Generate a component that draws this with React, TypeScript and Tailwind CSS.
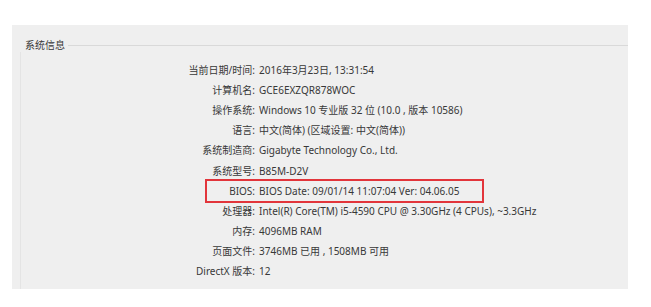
// system info panel (dxdiag style) with the BIOS row marked in red

const rows: { label: string; value: string; mark?: boolean }[] = [
  { label: "当前日期/时间:", value: "2016年3月23日, 13:31:54" },
  { label: "计算机名:", value: "GCE6EXZQR878WOC" },
  { label: "操作系统:", value: "Windows 10 专业版 32 位 (10.0 , 版本 10586)" },
  { label: "语言:", value: "中文(简体) (区域设置: 中文(简体))" },
  { label: "系统制造商:", value: "Gigabyte Technology Co., Ltd." },
  { label: "系统型号:", value: "B85M-D2V" },
  { label: "BIOS:", value: "BIOS Date: 09/01/14 11:07:04 Ver: 04.06.05", mark: true },
  { label: "处理器:", value: "Intel(R) Core(TM) i5-4590 CPU @ 3.30GHz (4 CPUs), ~3.3GHz" },
  { label: "内存:", value: "4096MB RAM" },
  { label: "页面文件:", value: "3746MB 已用 , 1508MB 可用" },
  { label: "DirectX 版本:", value: "12" },
];

export default function App() {
  return (
    <div
      className="w-[651px] h-[307px] bg-white pt-[25px] pl-[12px] text-[10px] text-[#383838]"
      style={{ fontFamily: '"Noto Sans", "Noto Sans CJK SC", sans-serif' }}
    >
      <div className="w-[616px] h-[264px] bg-[#efefef] pl-[8px] pt-[13px]">
        {/* group box title + line */}
        <div className="flex items-center h-[14px] -ml-[2px]">
          <span className="pl-[7px] pr-[3px] leading-[14px]">系统信息</span>
          <div className="flex-1 h-px bg-[#d9d9d9]" />
        </div>

        <div className="border-l border-[#e4e4e4] h-[237px] pt-[8px]">
          {rows.map((r) => (
            <div key={r.label} className="relative flex items-center h-[20.1px]">
              <div className="w-[234px] text-right shrink-0 leading-[14px]">{r.label}</div>
              <div className="pl-[4px] whitespace-nowrap leading-[14px]">{r.value}</div>
              {r.mark && (
                <div className="absolute left-[184px] top-[-2px] w-[279px] h-[24px] border-2 border-[#e2353b]" />
              )}
            </div>
          ))}
        </div>
      </div>
    </div>
  );
}
